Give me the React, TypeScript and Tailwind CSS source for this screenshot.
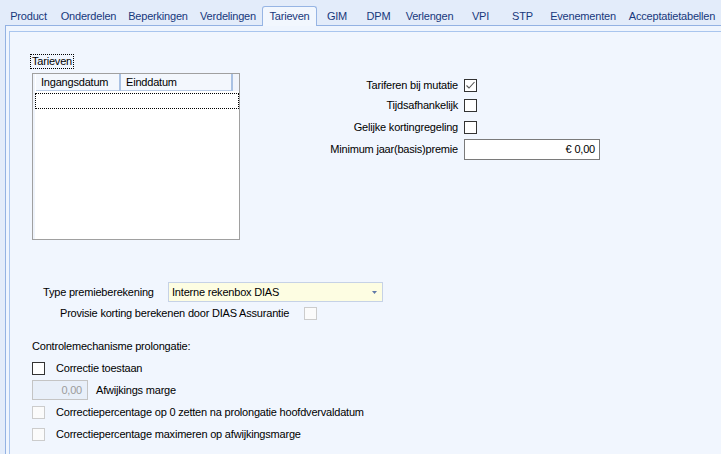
import React from "react";

const tabs: { label: string; w: string; active?: boolean }[] = [
  { label: "Product", w: "w-[53px]" },
  { label: "Onderdelen", w: "w-[67px]" },
  { label: "Beperkingen", w: "w-[72px]" },
  { label: "Verdelingen", w: "w-[68px]" },
  { label: "Tarieven", w: "w-[55px]", active: true },
  { label: "GIM", w: "w-[40px]" },
  { label: "DPM", w: "w-[43px]" },
  { label: "Verlengen", w: "w-[59px]" },
  { label: "VPI", w: "w-[43px]" },
  { label: "STP", w: "w-[41px]" },
  { label: "Evenementen", w: "w-[80px]" },
  { label: "Acceptatietabellen", w: "w-[98px]" },
];

function CheckBox({ checked, disabled }: { checked?: boolean; disabled?: boolean }) {
  return (
    <div
      className={
        disabled
          ? "w-[13px] h-[13px] border border-[#cccccc] bg-[#fbfbfb] shrink-0"
          : "w-[13px] h-[13px] border border-[#333333] bg-white shrink-0 flex items-center justify-center"
      }
    >
      {checked && (
        <svg width="11" height="11" viewBox="0 0 11 11">
          <polyline points="1.5,5.5 4,8 9.5,2" fill="none" stroke="#555555" strokeWidth="1.1" />
        </svg>
      )}
    </div>
  );
}

export default function App() {
  return (
    <div className="w-[721px] h-[454px] bg-[#e3ecfa] overflow-hidden flex flex-col font-['Liberation_Sans',Arial,sans-serif] text-[11px] text-black tracking-[-0.2px]">
      {/* Tabs */}
      <div className="h-[25px] shrink-0 flex items-end pl-[2px]">
        {tabs.map((t) =>
          t.active ? (
            <div
              key={t.label}
              className={`${t.w} h-[20px] mb-[-1px] relative z-10 rounded-t-[3px] border border-b-0 border-[#97b5e4] bg-[#f2f7fe] flex items-center justify-center text-[#17387c] pb-[1px]`}
            >
              {t.label}
            </div>
          ) : (
            <div
              key={t.label}
              className={`${t.w} h-[18px] flex items-center justify-center text-[#17387c]`}
            >
              {t.label}
            </div>
          )
        )}
      </div>

      {/* Panel */}
      <div className="flex-1 ml-[5px] border-l border-t border-[#93b2e3] bg-[#eff5fe] pt-[5px] pl-[3px] flex flex-col">
        <div className="flex-1 border-l border-t border-[#a9c5ee] bg-[#f1f6fe] flex flex-col">
          {/* Top section */}
          <div className="flex">
            <div className="ml-[20px] mt-[22px] w-[210px] flex flex-col items-start">
              <div className="h-[15px] border border-dotted border-black px-[1px] leading-[13px]">Tarieven</div>
              <div className="mt-[4px] ml-[2px] w-[208px] h-[167px] border border-[#a0a0a0] bg-white flex">
                <div className="w-[2px] bg-[#eef3fb]" />
                <div className="flex-1 flex flex-col">
                  <div className="h-[17px] flex bg-[#f3f7fd]">
                    <div className="w-[1px] bg-white" />
                    <div className="w-[83px] border-b border-[#b9cce7] flex items-center pl-[5px]">Ingangsdatum</div>
                    <div className="w-[2px] bg-[#a9c1e3]" />
                    <div className="w-[110px] border-b border-[#b9cce7] flex items-center pl-[5px]">Einddatum</div>
                    <div className="w-[2px] bg-[#a9c1e3]" />
                    <div className="flex-1 bg-[#f0f4fb]" />
                  </div>
                  <div className="mt-[2px] h-[16px] border border-dotted border-black" />
                </div>
              </div>
            </div>

            <div className="mt-[47px] flex flex-col">
              <div className="flex items-center h-[13px]">
                <div className="w-[218px] text-right">Tariferen bij mutatie</div>
                <div className="ml-[6px]">
                  <CheckBox checked />
                </div>
              </div>
              <div className="flex items-center h-[13px] mt-[7px]">
                <div className="w-[218px] text-right">Tijdsafhankelijk</div>
                <div className="ml-[6px]">
                  <CheckBox />
                </div>
              </div>
              <div className="flex items-center h-[13px] mt-[9px]">
                <div className="w-[218px] text-right">Gelijke kortingregeling</div>
                <div className="ml-[6px]">
                  <CheckBox />
                </div>
              </div>
              <div className="flex items-center h-[21px] mt-[5px]">
                <div className="w-[218px] text-right">Minimum jaar(basis)premie</div>
                <div className="ml-[6px] w-[136px] h-[21px] border border-[#7a7a7a] bg-white flex items-center justify-end pr-[4px]">
                  € 0,00
                </div>
              </div>
            </div>
          </div>

          {/* Type premieberekening */}
          <div className="mt-[42px] flex items-center h-[20px] pl-[33px]">
            <div className="w-[125px]">Type premieberekening</div>
            <div className="w-[215px] h-[20px] border border-[#c6d2e6] bg-[#fdfde2] flex items-center pl-[3px] pr-[5px]">
              <span className="flex-1">Interne rekenbox DIAS</span>
              <svg width="5" height="3" viewBox="0 0 5 3">
                <polygon points="0,0 5,0 2.5,3" fill="#6078a8" />
              </svg>
            </div>
          </div>
          <div className="mt-[5px] flex items-center h-[13px] pl-[50px]">
            <div className="w-[244px]">Provisie korting berekenen door DIAS Assurantie</div>
            <CheckBox disabled />
          </div>

          {/* Controlemechanisme */}
          <div className="mt-[20px] h-[13px] flex items-center pl-[22px]">Controlemechanisme prolongatie:</div>
          <div className="mt-[9px] h-[13px] flex items-center pl-[22px]">
            <CheckBox />
            <span className="ml-[11px]">Correctie toestaan</span>
          </div>
          <div className="mt-[5px] h-[20px] flex items-center pl-[22px]">
            <div className="w-[56px] h-[20px] border border-[#c4c4c4] bg-[#e8eff9] flex items-center justify-end pr-[5px] text-[#9c9c9c]">
              0,00
            </div>
            <span className="ml-[8px]">Afwijkings marge</span>
          </div>
          <div className="mt-[6px] h-[13px] flex items-center pl-[22px]">
            <CheckBox disabled />
            <span className="ml-[11px]">Correctiepercentage op 0 zetten na prolongatie hoofdvervaldatum</span>
          </div>
          <div className="mt-[9px] h-[13px] flex items-center pl-[22px]">
            <CheckBox disabled />
            <span className="ml-[11px]">Correctiepercentage maximeren op afwijkingsmarge</span>
          </div>
        </div>
      </div>
    </div>
  );
}
